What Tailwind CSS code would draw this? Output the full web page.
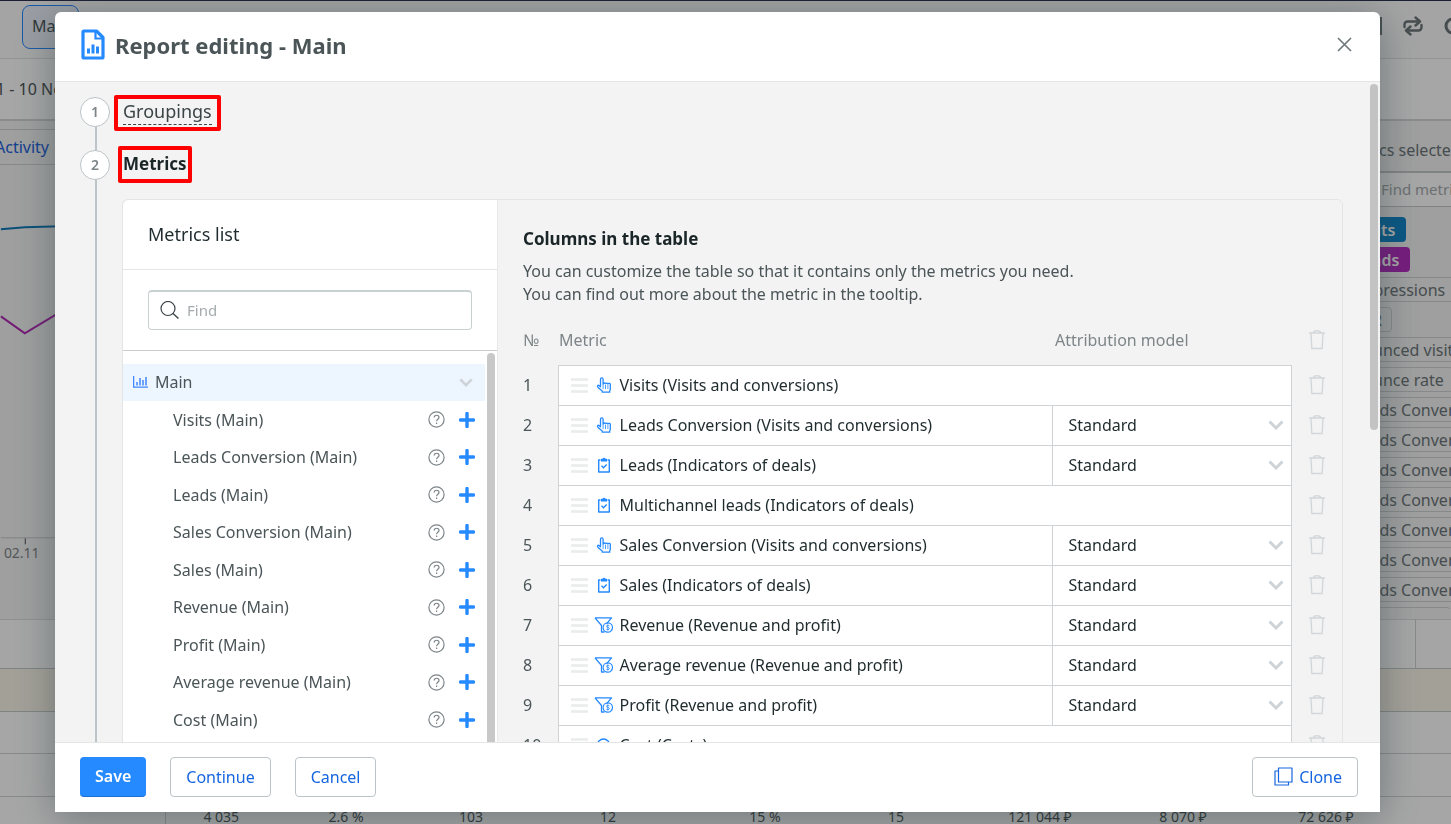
<!DOCTYPE html>
<html lang="en">
<head>
<meta charset="utf-8">
<meta name="viewport" content="width=device-width, initial-scale=1">
<title>Report editing - Main</title>
<script src="https://cdn.jsdelivr.net/npm/@tailwindcss/browser@4"></script>
</head>
<body class="relative h-screen overflow-hidden bg-white font-['Noto_Sans',sans-serif] text-base text-[#4b5558]">

<svg class="hidden" aria-hidden="true">
  <symbol id="i-hand" viewBox="0 0 16 16"><path d="M4.500 9.800V2.200a1.300 1.300 0 0 1 2.600 0V7M7.100 6.800a1.300 1.300 0 0 1 2.400 0 1.300 1.300 0 0 1 2.400.3 1.300 1.300 0 0 1 2.400 1v4c0 .8-.6 1.300-.6 2v1.100H6.300v-1C5 13 3 11.500 1.700 9.900 1 8.800 2 7.900 3 8.500l1.500 1.300" fill="none" stroke="currentColor" stroke-width="1.300" stroke-linecap="round" stroke-linejoin="round"/><path d="M7.100 7v5M9.500 8v4M11.900 8v4" stroke="currentColor" stroke-width=".8"/></symbol>
  <symbol id="i-clip" viewBox="0 0 16 16"><path d="M4.500 3H2.700v12h10.600V3h-1.800" fill="none" stroke="currentColor" stroke-width="1.400" stroke-linejoin="round"/><path d="M5 1.700h1.600a1.500 1.500 0 0 1 2.800 0H11V4.500H5z" fill="currentColor"/><path d="M5.500 8.800l2 2 3.200-3.400" fill="none" stroke="currentColor" stroke-width="1.400"/></symbol>
  <symbol id="i-funnel" viewBox="0 0 20 16"><path d="M1 .8h16.500l-5 6M1 .8l6.500 7.700V15h3" fill="none" stroke="currentColor" stroke-width="1.300" stroke-linejoin="round"/><circle cx="13.800" cy="10.500" r="4.700" fill="none" stroke="currentColor" stroke-width="1.200"/><path d="M15.400 8.900c-.5-.8-3-.9-3 .4 0 1.500 3 .8 3 2.300 0 1.400-2.700 1.300-3.200.4M13.800 7.500v6" fill="none" stroke="currentColor" stroke-width=".8"/></symbol>
  <symbol id="i-coin" viewBox="0 0 16 16"><circle cx="7.500" cy="8" r="6" fill="none" stroke="currentColor" stroke-width="1.400"/><path d="M9.500 6.500c-.6-1-3.600-1-3.600.4 0 1.600 3.700.8 3.700 2.500 0 1.500-3 1.500-3.900.3" fill="none" stroke="currentColor"/></symbol>
  <symbol id="i-trash" viewBox="0 0 18 20"><path d="M1 3h16M5.500 2.700c0-1.500 1.500-1.900 3.500-1.900s3.500.4 3.500 1.900M3 3.500l.8 15h10.400L15 3.500" fill="none" stroke="currentColor" stroke-width="1.400"/></symbol>
  <symbol id="i-chev" viewBox="0 0 16 10"><path d="M1.500 1.500L8 8l6.500-6.500" fill="none" stroke="currentColor" stroke-width="3"/></symbol>
  <symbol id="i-grip" viewBox="0 0 17 15"><path d="M1 1.500h15M1 7.500h15M1 13.500h15" stroke="currentColor" stroke-width="2.600" stroke-linecap="round"/></symbol>
  <symbol id="i-help" viewBox="0 0 17 17"><circle cx="8.500" cy="8.500" r="7.600" fill="none" stroke="currentColor" stroke-width="1.200"/><path d="M6.200 6.500c0-3 4.800-3 4.800 0 0 1.800-2.400 1.800-2.400 3.800M8.600 11.600v1.400" fill="none" stroke="currentColor" stroke-width="1.200"/></symbol>
  <symbol id="i-plus" viewBox="0 0 16 16"><path d="M8 1.500v13M1.500 8h13" stroke="currentColor" stroke-width="3.400" stroke-linecap="round"/></symbol>
</svg>

<!-- Dashboard behind the dialog -->
<div class="flex h-full flex-col overflow-hidden border-t border-[#2b3150]" aria-hidden="true" inert>
  <header class="flex h-[58px] shrink-0 items-start justify-between border-b border-[#e2e2e2] bg-[#fcfcfc] pt-1 pl-[22px]">
    <button class="h-11 w-[57px] rounded-lg border border-[#2589ff] bg-[#eef3fc] px-[9px] pb-[2px] text-left">Main</button>
    <div class="-mr-3 flex h-10 items-center gap-5 pt-[2px] text-[#6d777a]">
      <svg class="h-5 w-5" viewBox="0 0 20 20"><path d="M2 2h16v16H2z" fill="none" stroke="currentColor" stroke-width="2"/></svg>
      <svg class="h-5 w-5" viewBox="0 0 20 20"><path d="M1.500 11V8.500a3 3 0 0 1 3-3H14M18.500 9v2.500a3 3 0 0 1-3 3H6" fill="none" stroke="currentColor" stroke-width="2.400" stroke-linecap="round"/><path d="M12.500 1.500l4.500 4-4.500 4M7.500 10.500L3 14.500l4.500 4" fill="none" stroke="currentColor" stroke-width="2.400" stroke-linecap="round" stroke-linejoin="round"/></svg>
      <svg class="h-5 w-5" viewBox="0 0 20 20"><circle cx="10" cy="10" r="7" fill="none" stroke="currentColor" stroke-width="3"/></svg>
    </div>
  </header>
  <div class="-ml-1 flex h-[62px] shrink-0 items-center border-b-2 border-[#d4d6d7]">1 - 10 November</div>
  <div class="flex min-h-0 flex-1">
    <section class="flex flex-1 flex-col bg-[#f4f4f4] pt-2">
      <div class="-ml-[5px] flex h-9 items-center border-y border-[#cfd2d3] text-[#1b63dd]">Activity</div>
      <svg class="mt-auto mb-[44px] h-[412px] w-[400px]" viewBox="0 0 400 412">
        <path d="M0 64.500L24 62.500 60 61.500H400" fill="none" stroke="#0e7ab8" stroke-width="2"/>
        <path d="M0 152l24 17 40-24" fill="none" stroke="#b02bb4" stroke-width="2"/>
        <path d="M0 374.500h400" stroke="#c5c9ca"/>
        <path d="M24.500 375v6" stroke="#4b5558"/>
        <text x="3" y="395" font-size="14" fill="#7d8588">02.11</text>
      </svg>
    </section>
    <aside class="flex w-[112px] shrink-0 flex-col overflow-hidden bg-[#f4f4f4] whitespace-nowrap text-[#6d777a]">
      <div class="flex h-[52px] shrink-0 items-center border-b-2 border-[#c5c9ca] pt-2">Metrics selected</div>
      <div class="flex h-[34px] shrink-0 items-center border-b border-[#c5c9ca] bg-white pl-[42px] text-[15px] text-[#a5acae]">Find metrics</div>
      <ul id="chips" class="mb-[10px] flex min-h-0 flex-1 flex-col items-start gap-[5px] overflow-hidden pt-[10px] pl-1"></ul>
    </aside>
  </div>
  <table class="w-full shrink-0 table-fixed border-collapse text-center text-sm">
    <colgroup><col class="w-[165px]"><col class="w-[112px]"><col class="w-[138px]"><col class="w-[112px]"><col class="w-[162px]"><col class="w-[152px]"><col class="w-[110px]"><col class="w-[178px]"><col class="w-[108px]"><col class="w-[178px]"><col></colgroup>
    <tbody>
      <tr class="h-[49px] border-t border-[#dcdee0] bg-[#fdfdfd]"><td colspan="10" class="border-r border-[#d0d3d4]"></td><td></td></tr>
      <tr class="h-[43px] border-y border-[#c5c9ca] bg-[#fbf6ea]"><td colspan="11"></td></tr>
      <tr class="h-[42px] border-b border-[#d0d3d4]"><td colspan="11"></td></tr>
      <tr class="h-[43px] border-b border-[#d0d3d4]"><td colspan="11"></td></tr>
      <tr class="h-[27px] align-top leading-10"><td class="border-r border-[#d0d3d4]"></td><td><div class="h-[27px]">4 035</div></td><td><div class="h-[27px]">2.6 %</div></td><td><div class="h-[27px]">103</div></td><td><div class="h-[27px]">12</div></td><td><div class="h-[27px]">15 %</div></td><td><div class="h-[27px]">15</div></td><td><div class="h-[27px]">121 044 ₽</div></td><td><div class="h-[27px]">8 070 ₽</div></td><td><div class="h-[27px]">72 626 ₽</div></td><td></td></tr>
    </tbody>
  </table>
</div>

<!-- Dialog -->
<div class="fixed inset-0 flex bg-black/35 py-3 pr-[71px] pl-[55px]">
  <main role="dialog" aria-labelledby="title" class="flex min-w-0 flex-1 flex-col overflow-hidden rounded-t-md bg-white shadow-[0_6px_40px_rgba(40,60,65,0.45)]">
    <header class="flex h-[70px] shrink-0 items-center border-b border-[#e5e5e5] pr-[27px] pb-1 pl-[26px]">
      <svg class="h-[31px] w-6 text-[#2589ff]" viewBox="0 0 24 31" aria-hidden="true"><path d="M3 2h12.500L22 8.500V28a1 1 0 0 1-1 1H3a1 1 0 0 1-1-1V3a1 1 0 0 1 1-1z" fill="none" stroke="currentColor" stroke-width="3.200" stroke-linejoin="round"/><path d="M14.500 3v6.500H21" fill="none" stroke="currentColor" stroke-width="2.200"/><path d="M7.500 19.500v5M12 15.500v9M16.500 17.500v7" stroke="currentColor" stroke-width="3"/></svg>
      <h1 id="title" class="ml-[10px] text-[22px] leading-8 font-bold">Report editing - Main</h1>
      <button class="ml-auto p-px text-[#6d777a]" aria-label="Close"><svg class="h-[15px] w-[15px]" viewBox="0 0 15 15"><path d="M1 1l13 13M14 1L1 14" stroke="currentColor" stroke-width="1.600"/></svg></button>
    </header>

    <div class="relative min-h-0 flex-1 overflow-hidden bg-[#f3f3f3]">
      <div class="absolute top-[2px] right-[2px] h-[346px] w-2 rounded-full bg-[#c3c3c3]"></div>
      <div class="absolute top-[30px] bottom-0 left-10 w-[2px] bg-[#bcc4c7]"></div>
      <ol class="relative pt-[15px] pr-[37px] pl-[25px]">
        <li class="flex h-[53px] items-start">
          <span class="flex h-[30px] w-[30px] items-center justify-center rounded-full border border-[#bcc4c7] bg-white text-sm font-semibold text-[#7d8588]">1</span>
          <a href="#groupings" class="relative ml-[13px] text-lg leading-7 text-[#3a4447]"><span class="border-b border-dashed border-[#3a4447] pb-px">Groupings</span><span class="absolute -inset-x-[9px] -top-[2px] -bottom-[6px] rounded-xs border-4 border-[#ff0000]"></span></a>
        </li>
        <li>
          <div class="flex h-[49px] items-start">
            <span class="flex h-[30px] w-[30px] items-center justify-center rounded-full border border-[#bcc4c7] bg-white text-sm font-semibold text-[#7d8588]">2</span>
            <h2 class="relative ml-[13px] text-[17px] leading-7 font-bold text-[#1a2528]">Metrics<span class="absolute -inset-x-[5px] -top-1 -bottom-[5px] rounded-xs border-4 border-[#ff0000]"></span></h2>
          </div>
          <div class="ml-[42px] flex rounded-md border border-[#e4e4e4]">
            <section class="w-[375px] shrink-0 rounded-tl-md border-r border-[#e8e8e8] bg-white">
              <h3 class="h-[70px] border-b border-[#e5e5e5] pl-[25px] text-lg leading-[68px] text-[#1f2b2e]">Metrics list</h3>
              <div class="border-b border-[#c9cdcf] px-[25px] py-5">
                <label class="flex h-10 items-center gap-[7px] rounded border border-t-2 border-[#c9d0d2] px-[11px]">
                  <svg class="h-5 w-5 shrink-0 text-[#3a4447]" viewBox="0 0 20 20" aria-hidden="true"><circle cx="8" cy="7.500" r="7" fill="none" stroke="currentColor" stroke-width="1.200"/><path d="M13 12.500l5.500 5" stroke="currentColor" stroke-width="1.400"/></svg>
                  <input type="text" placeholder="Find" aria-label="Find" class="min-w-0 flex-1 text-[15px] outline-none placeholder:text-[#a5acae]">
                </label>
              </div>
              <div class="relative pt-[13px] pr-3">
                <div class="absolute top-[2px] right-[2px] bottom-0 w-2 rounded-t-full bg-[#c8c8c8]"></div>
                <button class="flex h-[37px] w-full items-center bg-[#edf5ff] pr-3 pb-px pl-[10px] text-left">
                  <svg class="h-3 w-[15px] text-[#4287ff]" viewBox="0 0 15 12" aria-hidden="true"><path d="M.6 0v11.200H15" fill="none" stroke="currentColor" stroke-width="1.300"/><path d="M4 6v3.500M7 2v7.500M10 4v5.500M13 1v8.500" stroke="currentColor" stroke-width="1.500"/></svg>
                  <span class="ml-[7px] flex-1">Main</span>
                  <svg class="h-[9px] w-[14px] text-[#cdd3d6]"><use href="#i-chev"/></svg>
                </button>
                <ul id="list" class="pr-[10px] pb-5 pl-[50px]"></ul>
              </div>
            </section>
            <section class="min-w-0 flex-1 pt-[25px] pl-[25px]">
              <h3 class="text-[17px] leading-7 font-bold text-[#1a2528]">Columns in the table</h3>
              <p class="mt-[7px] leading-[23px]">You can customize the table so that it contains only the metrics you need.<br>You can find out more about the metric in the tooltip.</p>
              <table class="mt-[9px] w-full table-fixed border-collapse text-left">
                <colgroup><col class="w-[35px]"><col><col class="w-[239px]"><col class="w-[51px]"></colgroup>
                <thead class="text-[#7d8588]"><tr class="h-[50px]">
                  <th class="font-normal">№</th><th class="pl-px font-normal">Metric</th><th class="pl-[3px] font-normal">Attribution model</th>
                  <th class="text-center"><button class="block w-full text-[#d3d7d9]" aria-label="Delete all"><svg class="mx-auto h-5 w-[18px]"><use href="#i-trash"/></svg></button></th>
                </tr></thead>
                <tbody id="rows"></tbody>
              </table>
            </section>
          </div>
        </li>
      </ol>
    </div>

    <footer class="flex h-[70px] shrink-0 items-center gap-6 border-t border-[#e5e5e5] pr-[22px] pb-[2px] pl-[25px] text-[#1766e0]">
      <button class="h-10 rounded border-b border-[#1d6fd0] bg-[#2589ff] px-[15px] font-semibold text-white">Save</button>
      <button class="h-10 rounded border border-[#bcc4c7] px-[15px]">Continue</button>
      <button class="h-10 rounded border border-[#bcc4c7] px-[15px]">Cancel</button>
      <button class="ml-auto flex h-10 items-center gap-[6px] rounded border border-[#bcc4c7] pr-[15px] pl-[21px]"><svg class="h-[19px] w-[19px]" viewBox="0 0 19 19" aria-hidden="true"><path d="M4.500 1h13.500v14H4.500zM4.500 4H1v14h13.500v-3" fill="none" stroke="currentColor" stroke-width="1.200" stroke-linejoin="round"/></svg>Clone</button>
    </footer>
  </main>
</div>

<script>
const chips = ['Impressions', 'CTR', 'Bounced visits', 'Bounce rate', ...Array(7).fill('Leads Conversion'), ''];
document.getElementById('chips').innerHTML =
  '<li class="flex h-[25px] shrink-0 items-center rounded bg-[#0f86cb] px-[11px] font-semibold text-white">Visits</li>' +
  '<li class="flex h-[25px] shrink-0 items-center rounded bg-[#b52bc0] px-[11px] font-semibold text-white">Leads</li>' +
  chips.map(c => `<li class="flex h-[25px] shrink-0 items-center rounded border border-[#cfd2d3] px-[9px] empty:w-full">${c}</li>`).join('');

document.getElementById('list').innerHTML =
  ['Visits', 'Leads Conversion', 'Leads', 'Sales Conversion', 'Sales', 'Revenue', 'Profit', 'Average revenue', 'Cost'].map(m => `
  <li class="flex items-center odd:h-[37px] even:h-[38px]"><span class="flex-1">${m} (Main)</span>
    <button class="text-[#7d8588]" aria-label="About ${m}"><svg class="h-[17px] w-[17px]"><use href="#i-help"/></svg></button>
    <button class="ml-[14px] text-[#2589ff]" aria-label="Add ${m}"><svg class="h-4 w-4"><use href="#i-plus"/></svg></button></li>`).join('');

const rows = [
  ['hand', 'Visits (Visits and conversions)', 0], ['hand', 'Leads Conversion (Visits and conversions)', 1],
  ['clip', 'Leads (Indicators of deals)', 1], ['clip', 'Multichannel leads (Indicators of deals)', 0],
  ['hand', 'Sales Conversion (Visits and conversions)', 1], ['clip', 'Sales (Indicators of deals)', 1],
  ['funnel', 'Revenue (Revenue and profit)', 1], ['funnel', 'Average revenue (Revenue and profit)', 1],
  ['funnel', 'Profit (Revenue and profit)', 1], ['coin', 'Cost (Costs)', 0]];
document.getElementById('rows').innerHTML = rows.map(([icon, name, model], i) => `
  <tr class="h-10"><td>${i + 1}</td>
  <td class="border border-[#cfd3d5] bg-white p-0" ${model ? '' : 'colspan="2"'}><div class="flex items-center pl-3 text-[#1f2b2e]">
    <svg class="h-[15px] w-[17px] text-[#e9ebec]"><use href="#i-grip"/></svg>
    <span class="mr-[6px] ml-[6px] flex w-5 justify-center text-[#2589ff]"><svg class="h-4 ${icon === 'funnel' ? 'w-5' : 'w-4'}"><use href="#i-${icon}"/></svg></span>${name}</div></td>
  ${model ? `<td class="border border-[#cfd3d5] bg-white p-0"><div class="relative">
    <select aria-label="Attribution model for ${name}" class="block h-[38px] w-full appearance-none bg-transparent pl-4 text-[#1f2b2e]"><option>Standard</option><option>Last click</option></select>
    <svg class="pointer-events-none absolute top-[14px] right-[7px] h-[10px] w-4 text-[#cdd3d6]"><use href="#i-chev"/></svg></div></td>` : ''}
  <td><button class="block w-full text-[#d3d7d9]" aria-label="Delete ${name}"><svg class="mx-auto h-5 w-[18px]"><use href="#i-trash"/></svg></button></td></tr>`).join('');
</script>
</body>
</html>
